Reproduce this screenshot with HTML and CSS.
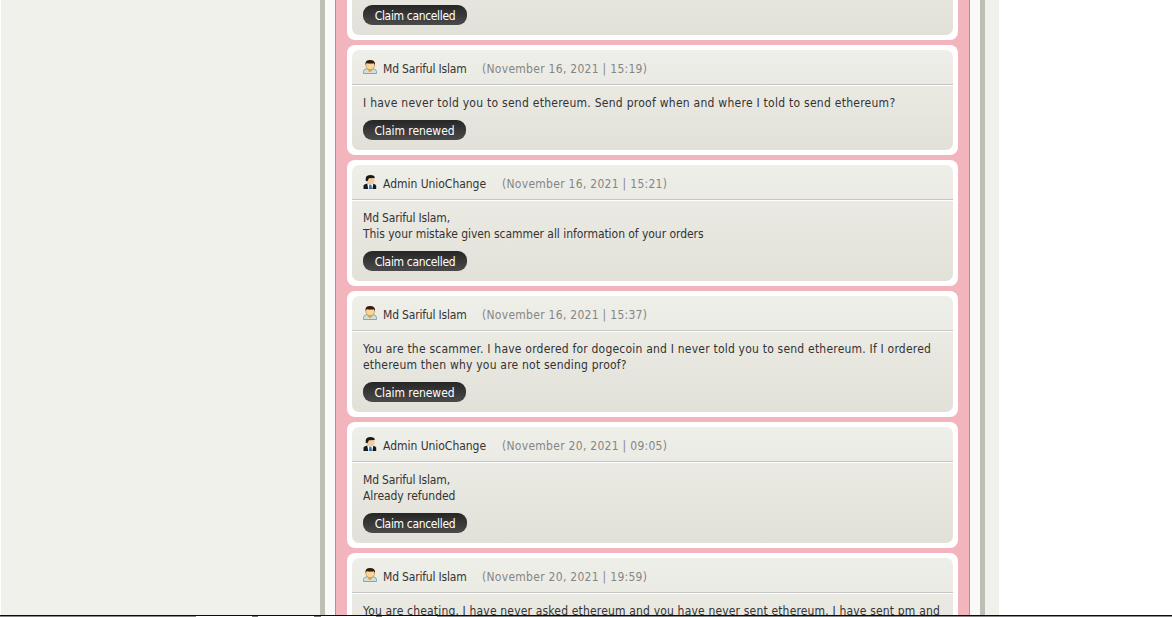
FILE: index.html
```html
<!DOCTYPE html>
<html lang="en">
<head>
    <meta charset="UTF-8">
    <meta name="viewport" content="width=device-width, initial-scale=1.0">
    <title>UnioChange - Claim</title>
    <link rel="stylesheet" href="styles.css">
</head>
<body>
    <!-- icons used in the message headers -->
    <svg class="sprite" width="0" height="0">
        <symbol id="icon-user" viewBox="0 0 14 15">
            <path d="M.5 13.500V11.500q0-2 2.500-2.500l2-.5h4l2 .5q2.500.5 2.500 2.500v2z" fill="#cfe0dc" stroke="#87a9a5"/>
            <path d="M4.500 8.500h5L8.800 11 7 12.300 5.200 11z" fill="#e2a257"/>
            <path d="M3 3h8.500v3.500Q10.800 9.800 7.200 9.800T3 6.500z" fill="#f8d59c" stroke="#c08b4c" stroke-width=".7"/>
            <path d="M2.500 5Q1.800 0 7 0q5.500 0 5 5L10.800 3.300Q7 4 3.700 3.100z" fill="#351b0a"/>
        </symbol>
        <symbol id="icon-admin" viewBox="0 0 14 15">
            <path d="M.5 14V10.800q.2-1.500 3-2h6.500q3 .5 3.200 2V14z" fill="#15181c"/>
            <path d="M4.300 8.800h6l-.9 5.200H5.200z" fill="#f4f7fa"/>
            <path d="M6.400 9.500h1.900l.7 4.500H5.900z" fill="#2371c4"/>
            <path d="M4 3h7.500v3.500q-.7 3-3.800 3T4 6.500z" fill="#f6cb9b"/>
            <path d="M2.800 6Q1.800 0 7 0q5.200 0 4.700 3L6 3.200 4.300 6.200z" fill="#17191b"/>
        </symbol>
    </svg>

    <div class="page">
        <div class="wrapper">
            <div class="claim">

                <div class="message">
                    <div class="message-inner">
                        <div class="message-body">
                            <span class="status cancelled">Claim cancelled</span>
                        </div>
                    </div>
                </div>

                <div class="message">
                    <div class="message-inner">
                        <div class="message-head">
                            <svg class="icon"><use href="#icon-user"/></svg>
                            <span class="name">Md Sariful Islam</span>
                            <span class="date">(November 16, 2021 | 15:19)</span>
                        </div>
                        <div class="message-body">
                            <p>I have never told you to send ethereum. Send proof when and where I told to send ethereum?</p>
                            <span class="status">Claim renewed</span>
                        </div>
                    </div>
                </div>

                <div class="message">
                    <div class="message-inner">
                        <div class="message-head">
                            <svg class="icon"><use href="#icon-admin"/></svg>
                            <span class="name admin">Admin UnioChange</span>
                            <span class="date">(November 16, 2021 | 15:21)</span>
                        </div>
                        <div class="message-body">
                            <p class="reply"><span class="to">Md Sariful Islam,</span><br>This your mistake given scammer all information of your orders</p>
                            <span class="status cancelled">Claim cancelled</span>
                        </div>
                    </div>
                </div>

                <div class="message">
                    <div class="message-inner">
                        <div class="message-head">
                            <svg class="icon"><use href="#icon-user"/></svg>
                            <span class="name">Md Sariful Islam</span>
                            <span class="date">(November 16, 2021 | 15:37)</span>
                        </div>
                        <div class="message-body">
                            <p class="long">You are the scammer. I have ordered for dogecoin and I never told you to send ethereum. If I ordered<br>ethereum then why you are not sending proof?</p>
                            <span class="status">Claim renewed</span>
                        </div>
                    </div>
                </div>

                <div class="message">
                    <div class="message-inner">
                        <div class="message-head">
                            <svg class="icon"><use href="#icon-admin"/></svg>
                            <span class="name admin">Admin UnioChange</span>
                            <span class="date">(November 20, 2021 | 09:05)</span>
                        </div>
                        <div class="message-body">
                            <p class="reply"><span class="to">Md Sariful Islam,</span><br>Already refunded</p>
                            <span class="status cancelled">Claim cancelled</span>
                        </div>
                    </div>
                </div>

                <div class="message">
                    <div class="message-inner">
                        <div class="message-head">
                            <svg class="icon"><use href="#icon-user"/></svg>
                            <span class="name">Md Sariful Islam</span>
                            <span class="date">(November 20, 2021 | 19:59)</span>
                        </div>
                        <div class="message-body">
                            <p class="last">You are cheating. I have never asked ethereum and you have never sent ethereum. I have sent pm and</p>
                        </div>
                    </div>
                </div>

            </div>
        </div>
    </div>

    <!-- bar at the bottom edge -->
    <div class="bottom-bar"></div>
</body>
</html>
```
FILE: styles.css
```css
* {
    box-sizing: border-box;
}

body {
    margin: 0;
    height: 617px;
    overflow: hidden;
    background: #fff;
    color: #333;
    font-family: Tahoma, "DejaVu Sans Condensed", sans-serif;
    font-size: 12px;
    line-height: 16px;
    display: flex;
    flex-direction: column;
}

.sprite {
    display: none;
}

.page {
    width: 998px;
    height: 615px;
    margin-left: 1px;
    padding-left: 319px;
    overflow: hidden;
    background: #f0f1eb;
}

.wrapper {
    width: 665px;
    height: 615px;
    padding: 0 10px;
    border-left: 5px solid #bebeb5;
    border-right: 5px solid #bebeb5;
    background: #f9f9f7;
}

/* pink column with the messages */
.claim {
    height: 615px;
    overflow: hidden;
    padding: 0 11px;
    border-left: 1px solid #d07f8b;
    border-right: 1px solid #d07f8b;
    background: #f3b5bd;
    display: flex;
    flex-direction: column;
    gap: 5px;
}

.message {
    flex: none;
    padding: 5px;
    border-radius: 8px;
    background: #fff;
}

.message-inner {
    border-radius: 7px;
    background: linear-gradient(#efefe9, #e1e1d9);
}

.message-head {
    display: flex;
    align-items: center;
    height: 35px;
    padding: 4px 11px 0;
    border-bottom: 1px solid #c5c5c7;
    box-shadow: 0 1px 0 #fff;
}

.icon {
    width: 14px;
    height: 15px;
    margin: -4px 6px 0 0;
}

.name {
    width: 99px;
    white-space: nowrap;
    letter-spacing: -0.18px;
}

.name.admin {
    width: 119px;
    letter-spacing: -0.03px;
}

.date {
    color: #858585;
    white-space: nowrap;
    letter-spacing: 0.28px;
}

.message-body {
    padding: 10px 11px;
}

.message-body p {
    margin: 0 0 9px;
    white-space: nowrap;
    letter-spacing: 0.26px;
}

.message-body .long {
    letter-spacing: 0.21px;
}

.message-body .last {
    margin-bottom: 39px;
    letter-spacing: 0.17px;
}

.message-body .reply {
    letter-spacing: -0.05px;
}

.reply .to {
    letter-spacing: -0.18px;
}

/* first message is scrolled past its header */
.message:first-child {
    margin-top: -70px;
}

.message:first-child .message-body {
    padding-top: 70px;
}

.status {
    display: block;
    width: 103px;
    height: 20px;
    padding-top: 1px;
    border-radius: 9px;
    background: linear-gradient(#262626, #4a4a4a);
    color: #fff;
    line-height: 20px;
    text-align: center;
    letter-spacing: -0.05px;
}

.status.cancelled {
    width: 104px;
    letter-spacing: -0.34px;
}

.bottom-bar {
    height: 2px;
    border-top: 1px solid #0c0c0c;
    background: linear-gradient(90deg, #8a8a8a 196px, #fff 196px 252px, #777 252px 258px, #fff 258px 314px, #777 314px 321px, #fff 321px 376px, #777 376px 382px, #fff 382px 437px, #8a8a8a 437px);
}
```
